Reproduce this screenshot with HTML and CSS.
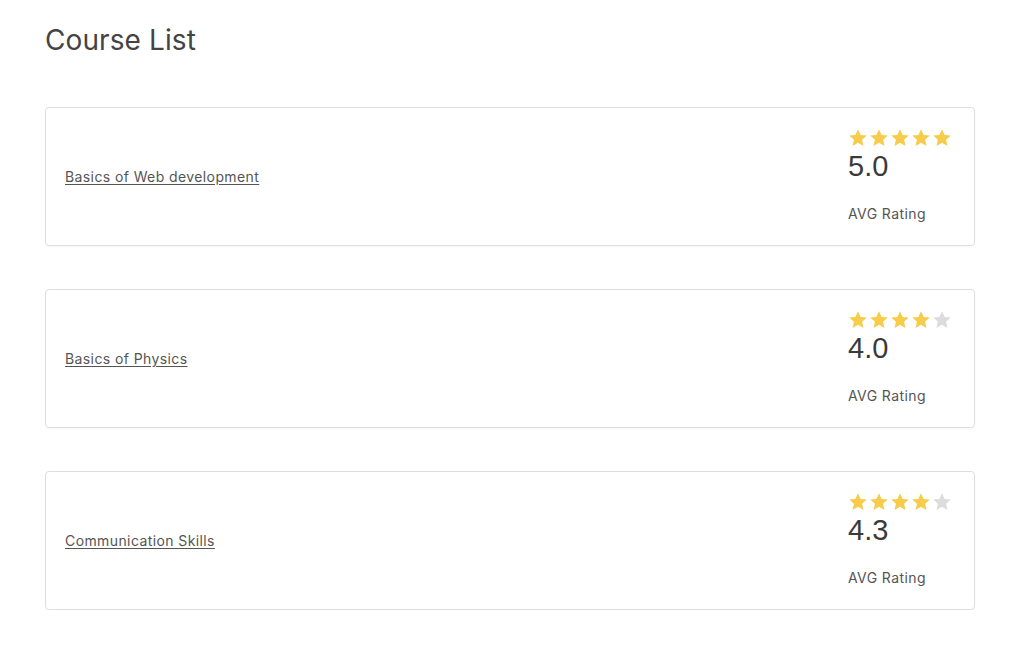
FILE: index.html
```html
<!DOCTYPE html>
<html lang="en">
<head>
<meta charset="utf-8">
<title>Course List</title>
<link rel="stylesheet" href="styles.css">
</head>
<body>
<main class="page">
  <h1 class="title">Course List</h1>
  <ul class="courses">
    <li class="card">
      <a class="course-link" href="#">Basics of Web development</a>
      <div class="rating">
        <div class="stars">
          <svg class="star on" viewBox="0 0 24 24"><path d="M12 1.5l3.1 6.9 7.4.7-5.6 5 1.7 7.4L12 17.6l-6.6 3.9 1.7-7.4-5.6-5 7.4-.7z"/></svg>
          <svg class="star on" viewBox="0 0 24 24"><path d="M12 1.5l3.1 6.9 7.4.7-5.6 5 1.7 7.4L12 17.6l-6.6 3.9 1.7-7.4-5.6-5 7.4-.7z"/></svg>
          <svg class="star on" viewBox="0 0 24 24"><path d="M12 1.5l3.1 6.9 7.4.7-5.6 5 1.7 7.4L12 17.6l-6.6 3.9 1.7-7.4-5.6-5 7.4-.7z"/></svg>
          <svg class="star on" viewBox="0 0 24 24"><path d="M12 1.5l3.1 6.9 7.4.7-5.6 5 1.7 7.4L12 17.6l-6.6 3.9 1.7-7.4-5.6-5 7.4-.7z"/></svg>
          <svg class="star on" viewBox="0 0 24 24"><path d="M12 1.5l3.1 6.9 7.4.7-5.6 5 1.7 7.4L12 17.6l-6.6 3.9 1.7-7.4-5.6-5 7.4-.7z"/></svg>
        </div>
        <div class="score">5.0</div>
        <div class="label">AVG Rating</div>
      </div>
    </li>
    <li class="card">
      <a class="course-link" href="#">Basics of Physics</a>
      <div class="rating">
        <div class="stars">
          <svg class="star on" viewBox="0 0 24 24"><path d="M12 1.5l3.1 6.9 7.4.7-5.6 5 1.7 7.4L12 17.6l-6.6 3.9 1.7-7.4-5.6-5 7.4-.7z"/></svg>
          <svg class="star on" viewBox="0 0 24 24"><path d="M12 1.5l3.1 6.9 7.4.7-5.6 5 1.7 7.4L12 17.6l-6.6 3.9 1.7-7.4-5.6-5 7.4-.7z"/></svg>
          <svg class="star on" viewBox="0 0 24 24"><path d="M12 1.5l3.1 6.9 7.4.7-5.6 5 1.7 7.4L12 17.6l-6.6 3.9 1.7-7.4-5.6-5 7.4-.7z"/></svg>
          <svg class="star on" viewBox="0 0 24 24"><path d="M12 1.5l3.1 6.9 7.4.7-5.6 5 1.7 7.4L12 17.6l-6.6 3.9 1.7-7.4-5.6-5 7.4-.7z"/></svg>
          <svg class="star off" viewBox="0 0 24 24"><path d="M12 1.5l3.1 6.9 7.4.7-5.6 5 1.7 7.4L12 17.6l-6.6 3.9 1.7-7.4-5.6-5 7.4-.7z"/></svg>
        </div>
        <div class="score">4.0</div>
        <div class="label">AVG Rating</div>
      </div>
    </li>
    <li class="card">
      <a class="course-link" href="#">Communication Skills</a>
      <div class="rating">
        <div class="stars">
          <svg class="star on" viewBox="0 0 24 24"><path d="M12 1.5l3.1 6.9 7.4.7-5.6 5 1.7 7.4L12 17.6l-6.6 3.9 1.7-7.4-5.6-5 7.4-.7z"/></svg>
          <svg class="star on" viewBox="0 0 24 24"><path d="M12 1.5l3.1 6.9 7.4.7-5.6 5 1.7 7.4L12 17.6l-6.6 3.9 1.7-7.4-5.6-5 7.4-.7z"/></svg>
          <svg class="star on" viewBox="0 0 24 24"><path d="M12 1.5l3.1 6.9 7.4.7-5.6 5 1.7 7.4L12 17.6l-6.6 3.9 1.7-7.4-5.6-5 7.4-.7z"/></svg>
          <svg class="star on" viewBox="0 0 24 24"><path d="M12 1.5l3.1 6.9 7.4.7-5.6 5 1.7 7.4L12 17.6l-6.6 3.9 1.7-7.4-5.6-5 7.4-.7z"/></svg>
          <svg class="star off" viewBox="0 0 24 24"><path d="M12 1.5l3.1 6.9 7.4.7-5.6 5 1.7 7.4L12 17.6l-6.6 3.9 1.7-7.4-5.6-5 7.4-.7z"/></svg>
        </div>
        <div class="score">4.3</div>
        <div class="label">AVG Rating</div>
      </div>
    </li>
  </ul>
</main>
</body>
</html>
```

FILE: styles.css
```css
* { box-sizing: border-box; }
html, body { margin: 0; padding: 0; background: #fff; }
body { font-family: "Inter", "Noto Sans", sans-serif; color: #444; }
.page { padding: 22px 49px 0 45px; }
.title {
  margin: 0 0 49px;
  font-size: 28px;
  font-weight: 400;
  color: #444;
  line-height: 36px;
  letter-spacing: 0.1px;
}
.courses { list-style: none; margin: 0; padding: 0; display: flex; flex-direction: column; gap: 43px; }
.card {
  display: flex;
  align-items: center;
  justify-content: space-between;
  height: 139px;
  padding: 0 22px 0 19px;
  border: 1px solid #dedede;
  border-radius: 4px;
  box-shadow: 0 1px 2px rgba(0,0,0,0.04);
}
.course-link { font-size: 14px; letter-spacing: 0.4px; color: #555; text-decoration: underline; text-underline-offset: 2px; }
.rating { align-self: flex-start; margin-top: 20px; width: 104px; display: flex; flex-direction: column; }
.stars { display: flex; gap: 1px; height: 20px; align-items: center; }
.star { width: 20px; height: 20px; }
.star.on { fill: #f6cc4a; }
.star.off { fill: #dcdcdc; }
.score { font-family: "Liberation Sans", Arial, sans-serif; font-size: 29px; line-height: 31px; color: #3a3a3a; margin-top: 3px; }
.label { font-size: 14px; letter-spacing: 0.4px; color: #555; margin-top: 23px; }
```
